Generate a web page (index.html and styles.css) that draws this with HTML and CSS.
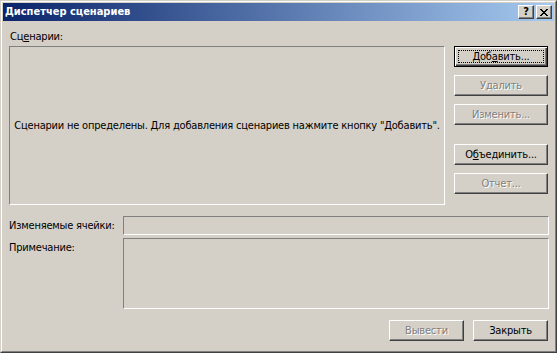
FILE: index.html
```html
<!DOCTYPE html>
<html lang="ru">
<head>
<meta charset="utf-8">
<title>Диспетчер сценариев</title>
<link rel="stylesheet" href="styles.css">
</head>
<body>
<div class="window">
  <div class="frame">
    <div class="titlebar">
      <span class="title">Диспетчер сценариев</span>
      <div class="caption-buttons">
        <span class="cap-btn help">?</span>
        <span class="cap-btn close">
          <svg width="8" height="7" viewBox="0 0 8 7" shape-rendering="crispEdges">
            <path d="M0 0h2v1h-2zM6 0h2v1h-2zM1 1h2v1h-2zM5 1h2v1h-2zM2 2h4v1h-4zM3 3h2v1h-2zM2 4h4v1h-4zM1 5h2v1h-2zM5 5h2v1h-2zM0 6h2v1h-2zM6 6h2v1h-2z" fill="#000"/>
          </svg>
        </span>
      </div>
    </div>
    <div class="content">
      <div class="top">
        <div class="label scen-label">Сц<u>е</u>нарии:</div>
        <div class="listbox"><span>Сценарии не определены. Для добавления сценариев нажмите кнопку "Добавить".</span></div>
        <div class="side-buttons">
          <button class="btn default"><span class="focus">Доб<u>а</u>вить...</span></button>
          <button class="btn disabled"><span class="cap">Удалить</span></button>
          <button class="btn disabled"><span class="cap">Изменить...</span></button>
          <button class="btn group-start"><span class="cap">О<u>б</u>ъединить...</span></button>
          <button class="btn disabled"><span class="cap">Отчет...</span></button>
        </div>
      </div>
      <div class="field-row">
        <div class="field-label">Изменяемые ячейки:</div>
        <div class="textbox"></div>
      </div>
      <div class="field-row note-row">
        <div class="field-label note-label">Примечание:</div>
        <div class="textbox textarea"></div>
      </div>
      <div class="bottom-buttons">
        <button class="btn small disabled"><span class="cap">Вывести</span></button>
        <button class="btn small"><span class="cap">Закрыть</span></button>
      </div>
    </div>
  </div>
</div>
</body>
</html>
```
FILE: styles.css
```css
html, body {
  margin: 0;
  padding: 0;
}
body {
  width: 557px;
  height: 353px;
  overflow: hidden;
  background: #d4d0c8;
  font-family: "DejaVu Sans Condensed", "Liberation Sans", sans-serif;
  font-size: 11px;
  letter-spacing: -0.2px;
  color: #000;
}
.window {
  box-sizing: border-box;
  width: 557px;
  height: 353px;
  border: 1px solid;
  border-color: #d4d0c8 #404040 #404040 #d4d0c8;
  background: #d4d0c8;
}
.frame {
  box-sizing: border-box;
  height: 100%;
  border: 1px solid;
  border-color: #fff #808080 #808080 #fff;
  padding: 1px;
  display: flex;
  flex-direction: column;
}
.titlebar {
  height: 18px;
  flex: none;
  background: linear-gradient(to right, #0a246a, #a6caf0);
  display: flex;
  align-items: center;
  justify-content: space-between;
  padding: 0 2px 0 2px;
  color: #fff;
  font-weight: bold;
  letter-spacing: 0;
}
.title {
  line-height: 18px;
}
.caption-buttons {
  display: flex;
  gap: 2px;
}
.cap-btn {
  box-sizing: border-box;
  width: 16px;
  height: 14px;
  background: #d4d0c8;
  border: 1px solid;
  border-color: #fff #404040 #404040 #fff;
  box-shadow: inset -1px -1px 0 #808080;
  display: flex;
  align-items: center;
  justify-content: center;
  color: #000;
  font-size: 11px;
  line-height: 12px;
}
.content {
  flex: 1;
  padding: 0 5px 0 6px;
  display: flex;
  flex-direction: column;
}
.top {
  display: grid;
  grid-template-columns: 436px 94px;
  grid-template-rows: 25px 159px;
  column-gap: 9px;
}
.scen-label {
  grid-column: 1 / 3;
  padding: 9px 0 0 1px;
  line-height: 13px;
}
.listbox {
  box-sizing: border-box;
  border: 1px solid;
  border-color: #808080 #fff #fff #808080;
  display: flex;
  align-items: center;
  justify-content: center;
  white-space: nowrap;
}
.side-buttons {
  display: flex;
  flex-direction: column;
  gap: 8px;
}
.btn {
  box-sizing: border-box;
  width: 94px;
  height: 21px;
  margin: 0;
  padding: 0;
  background: #d4d0c8;
  border: 1px solid;
  border-color: #fff #404040 #404040 #fff;
  box-shadow: inset -1px -1px 0 #808080;
  font: inherit;
  letter-spacing: inherit;
  color: #000;
  display: flex;
  align-items: center;
  justify-content: center;
}
.btn .cap {
  line-height: 13px;
}
.btn.default {
  border-color: #000;
  box-shadow: inset 1px 1px 0 #fff, inset -1px -1px 0 #404040, inset -2px -2px 0 #808080;
  padding: 3px;
}
.btn .focus {
  box-sizing: border-box;
  flex: 1;
  align-self: stretch;
  border: 1px dotted #000;
  display: flex;
  align-items: center;
  justify-content: center;
  line-height: 11px;
}
.btn.group-start {
  margin-top: 11px;
}
.btn.disabled {
  color: #808080;
  text-shadow: 1px 1px 0 #fff;
}
.field-row {
  display: flex;
  margin-top: 11px;
}
.field-label {
  width: 114px;
  flex: none;
  display: flex;
  align-items: center;
}
.textbox {
  box-sizing: border-box;
  width: 426px;
  height: 19px;
  border: 1px solid;
  border-color: #808080 #fff #fff #808080;
}
.note-row {
  margin-top: 3px;
}
.note-label {
  align-items: flex-start;
  padding-top: 3px;
}
.textarea {
  height: 71px;
}
.bottom-buttons {
  display: flex;
  justify-content: flex-end;
  gap: 9px;
  margin-top: 11px;
  margin-right: 1px;
}
.btn.small {
  width: 75px;
}
```
